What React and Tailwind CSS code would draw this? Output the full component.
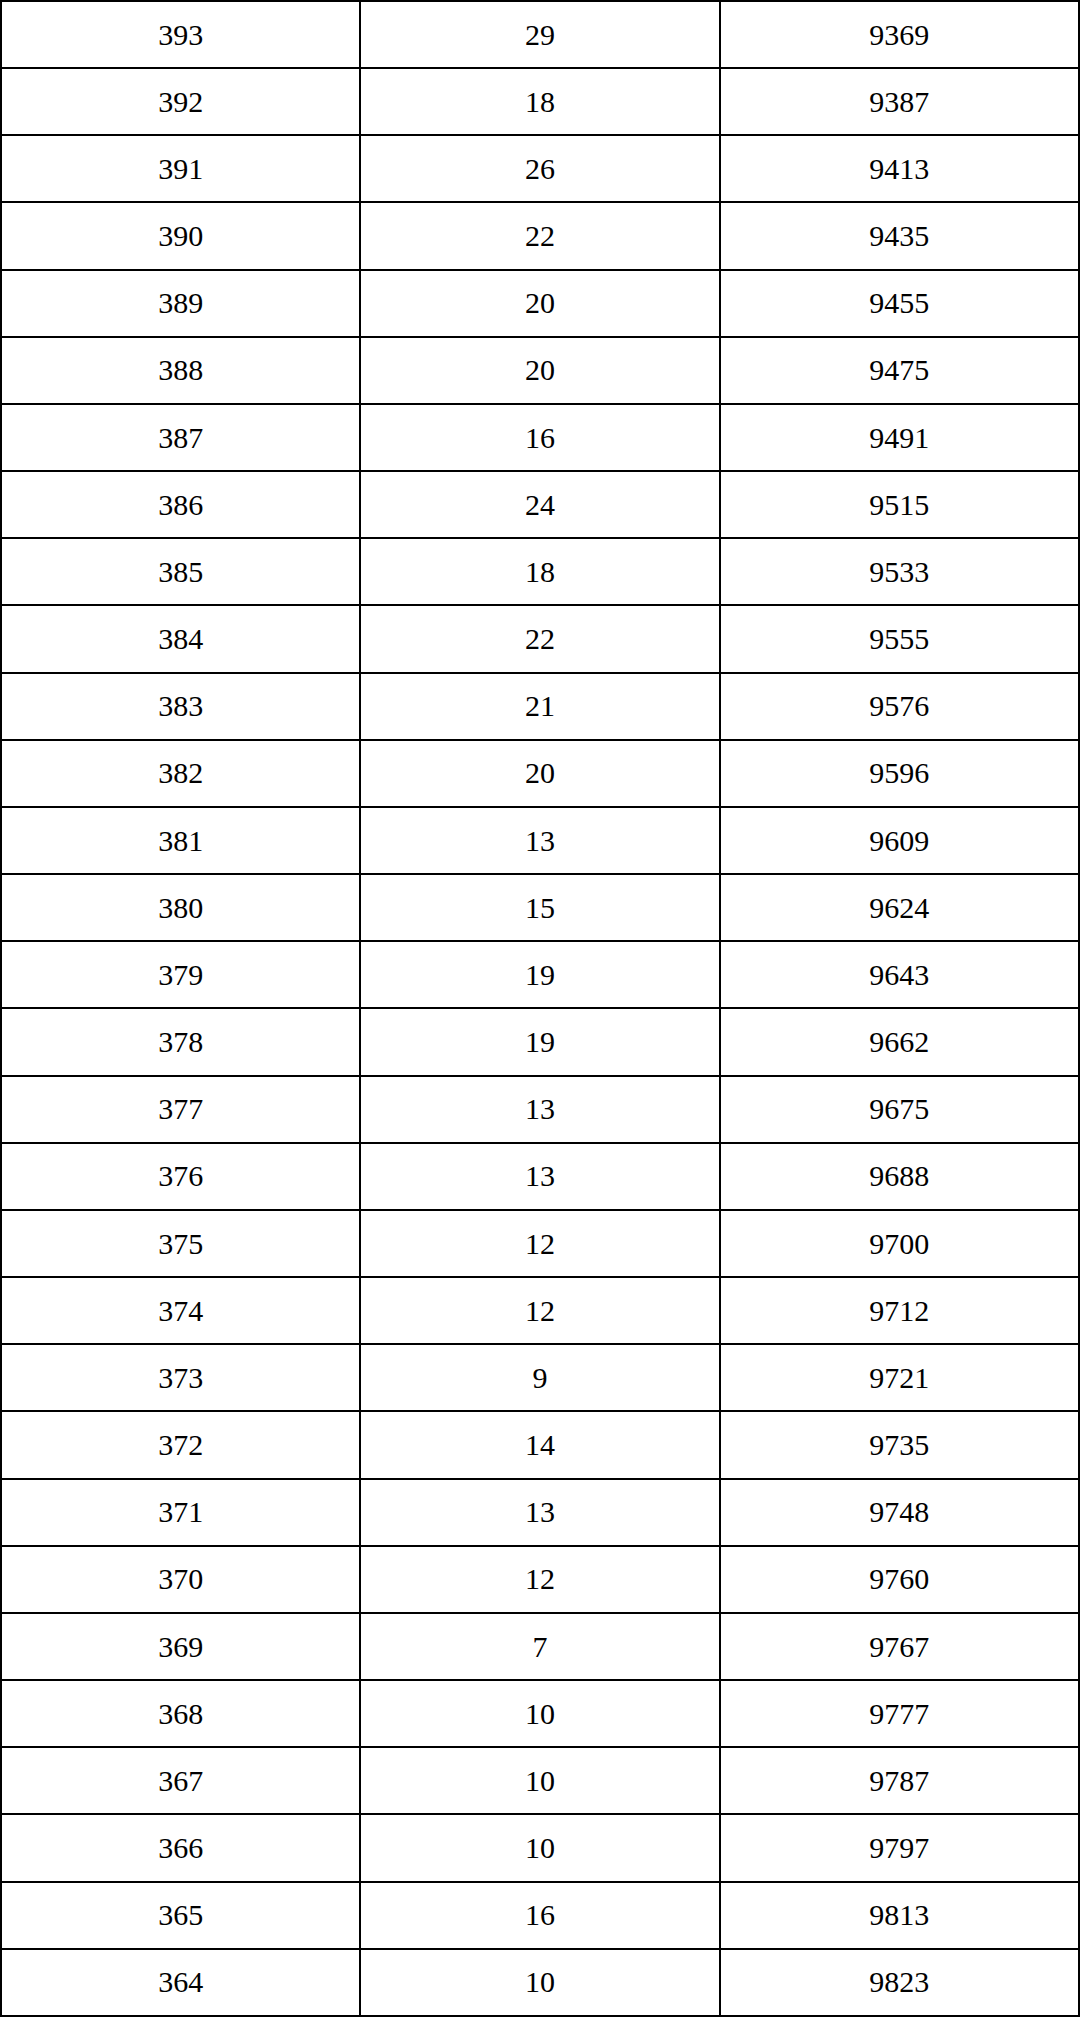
import React from "react";

const rows = [
  [393, 29, 9369],
  [392, 18, 9387],
  [391, 26, 9413],
  [390, 22, 9435],
  [389, 20, 9455],
  [388, 20, 9475],
  [387, 16, 9491],
  [386, 24, 9515],
  [385, 18, 9533],
  [384, 22, 9555],
  [383, 21, 9576],
  [382, 20, 9596],
  [381, 13, 9609],
  [380, 15, 9624],
  [379, 19, 9643],
  [378, 19, 9662],
  [377, 13, 9675],
  [376, 13, 9688],
  [375, 12, 9700],
  [374, 12, 9712],
  [373, 9, 9721],
  [372, 14, 9735],
  [371, 13, 9748],
  [370, 12, 9760],
  [369, 7, 9767],
  [368, 10, 9777],
  [367, 10, 9787],
  [366, 10, 9797],
  [365, 16, 9813],
  [364, 10, 9823],
];

const App = () => {
  return (
    <div className="w-[1080px] h-[2017px] bg-white font-['Liberation_Serif','Noto_Sans_CJK_SC',serif] text-[30px] text-black">
      <div className="h-full grid grid-cols-3 grid-rows-[repeat(30,1fr)] border-t-2 border-l-2 border-black">
        {rows.map((row) =>
          row.map((value, i) => (
            <div
              key={`${row[0]}-${i}`}
              className="flex items-center justify-center border-r-2 border-b-2 border-black leading-none"
            >
              {value}
            </div>
          ))
        )}
      </div>
    </div>
  );
};

export default App;
